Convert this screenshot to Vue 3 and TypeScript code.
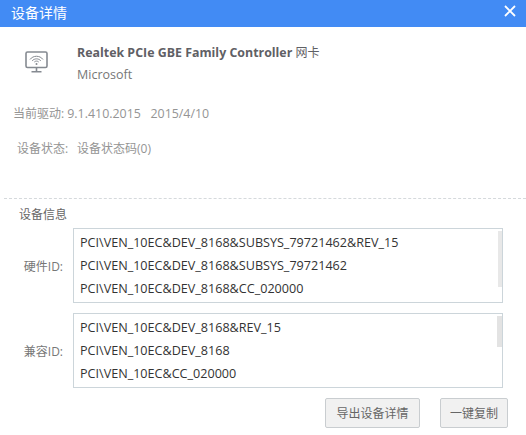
<script setup lang="ts">
const hardware: string[] = [
  'PCI\\VEN_10EC&DEV_8168&SUBSYS_79721462&REV_15',
  'PCI\\VEN_10EC&DEV_8168&SUBSYS_79721462',
  'PCI\\VEN_10EC&DEV_8168&CC_020000',
]
const compatible: string[] = [
  'PCI\\VEN_10EC&DEV_8168&REV_15',
  'PCI\\VEN_10EC&DEV_8168',
  'PCI\\VEN_10EC&CC_020000',
]
</script>

<template>
  <div class="dialog">
    <header class="titlebar">
      <span class="title">设备详情</span>
      <svg class="close" width="12" height="12" viewBox="0 0 12 12" aria-hidden="true">
        <path d="M1 1L11 11M11 1L1 11" stroke="#fff" stroke-width="1.8" fill="none" />
      </svg>
    </header>

    <section class="device">
      <svg class="device-icon" width="24" height="24" viewBox="0 0 24 24" aria-hidden="true">
        <rect x="1" y="1" width="21" height="15.5" rx="1.5" fill="none" stroke="#858a91" stroke-width="1.6" />
        <path d="M5 8.5C8 4.2 15 4.2 18 8.5M7.2 9.8C9.5 7.2 13.5 7.2 15.8 9.8M9.3 11C10.5 9.8 12.5 9.8 13.7 11" fill="none" stroke="#858a91" stroke-width="1" />
        <circle cx="11.5" cy="13" r="1" fill="#858a91" />
        <path d="M11.5 17V20M6.5 20.8H16.5" fill="none" stroke="#858a91" stroke-width="1.6" />
      </svg>
      <div class="device-text">
        <div class="device-name"><b>Realtek PCIe GBE Family Controller</b> 网卡</div>
        <div class="vendor">Microsoft</div>
      </div>
    </section>

    <div class="driver">当前驱动: <span class="latin">9.1.410.2015&nbsp;&nbsp;&nbsp;2015/4/10</span></div>
    <div class="status"><span class="status-label">设备状态:</span><span>设备状态码(0)</span></div>

    <div class="divider"></div>

    <div class="info-title">设备信息</div>

    <div class="id-row">
      <span class="id-label">硬件ID:</span>
      <div class="id-box">
        <div v-for="line in hardware" :key="line" class="id-line">{{ line }}</div>
        <div class="thumb thumb-long"></div>
      </div>
    </div>

    <div class="id-row second">
      <span class="id-label">兼容ID:</span>
      <div class="id-box">
        <div v-for="line in compatible" :key="line" class="id-line">{{ line }}</div>
        <div class="thumb thumb-short"></div>
      </div>
    </div>

    <footer class="actions">
      <button class="btn export" type="button">导出设备详情</button>
      <button class="btn copy" type="button">一键复制</button>
    </footer>
  </div>
</template>

<style scoped>
.dialog {
  width: 526px;
  height: 435px;
  background: #fff;
  overflow: hidden;
  font-family: "Open Sans", "Noto Sans CJK SC", sans-serif;
  font-size: 12px;
  color: #666;
}
.titlebar {
  height: 27px;
  background: #428bf4;
  display: flex;
  align-items: center;
  justify-content: space-between;
  padding: 0 10px 0 11px;
  box-sizing: border-box;
  color: #fff;
}
.title {
  font-size: 14px;
  line-height: 22px;
  margin-bottom: 2px;
}
.close {
  display: block;
  margin-bottom: 5px;
}
.device {
  display: flex;
  height: 70px;
  padding: 16px 0 0 25px;
  box-sizing: border-box;
}
.device-icon {
  margin: 8px 28px 0 0;
  flex: none;
}
.device-name {
  line-height: 20px;
  color: #5f6065;
}
.device-name b {
  font-weight: 700;
  font-size: 12.4px;
}
.vendor {
  margin-top: 2px;
  line-height: 20px;
  font-size: 12.5px;
  color: #777;
}
.driver {
  margin-top: 7px;
  padding-left: 13px;
  line-height: 20px;
  color: #949494;
}
.latin {
  font-size: 12.4px;
}
.status {
  margin-top: 15px;
  padding-left: 17px;
  line-height: 20px;
  color: #949494;
  display: flex;
}
.status-label {
  width: 60px;
}
.divider {
  margin: 39px 0 0 4px;
  border-top: 1px dashed #d5d9dc;
}
.info-title {
  margin-top: 6px;
  padding-left: 19px;
  line-height: 20px;
  color: #666;
}
.id-row {
  display: flex;
  align-items: center;
  margin-top: 3px;
}
.id-row.second {
  margin-top: 10px;
}
.id-label {
  width: 63px;
  text-align: right;
  margin-right: 10px;
  color: #777;
  flex: none;
}
.id-box {
  position: relative;
  width: 430px;
  height: 75px;
  box-sizing: border-box;
  border: 1px solid #ccd5da;
  padding-top: 2px;
  overflow: hidden;
}
.id-line {
  height: 23px;
  line-height: 23px;
  padding-left: 6px;
  font-size: 12.6px;
  color: #333;
  white-space: nowrap;
}
.thumb {
  position: absolute;
  top: 2px;
  right: 0;
  background: #e3e3e3;
}
.thumb-long {
  width: 4px;
  height: 56px;
  background: #e8e8e8;
}
.thumb-short {
  width: 5px;
  height: 31px;
}
.actions {
  display: flex;
  justify-content: flex-end;
  gap: 20px;
  margin-top: 10px;
  padding-right: 18px;
}
.btn {
  height: 30px;
  border: 1px solid #c9cdd0;
  border-radius: 2px;
  background: #f1f1f1;
  color: #666;
  font: inherit;
  padding: 0;
}
.export {
  width: 95px;
}
.copy {
  width: 68px;
}
</style>
